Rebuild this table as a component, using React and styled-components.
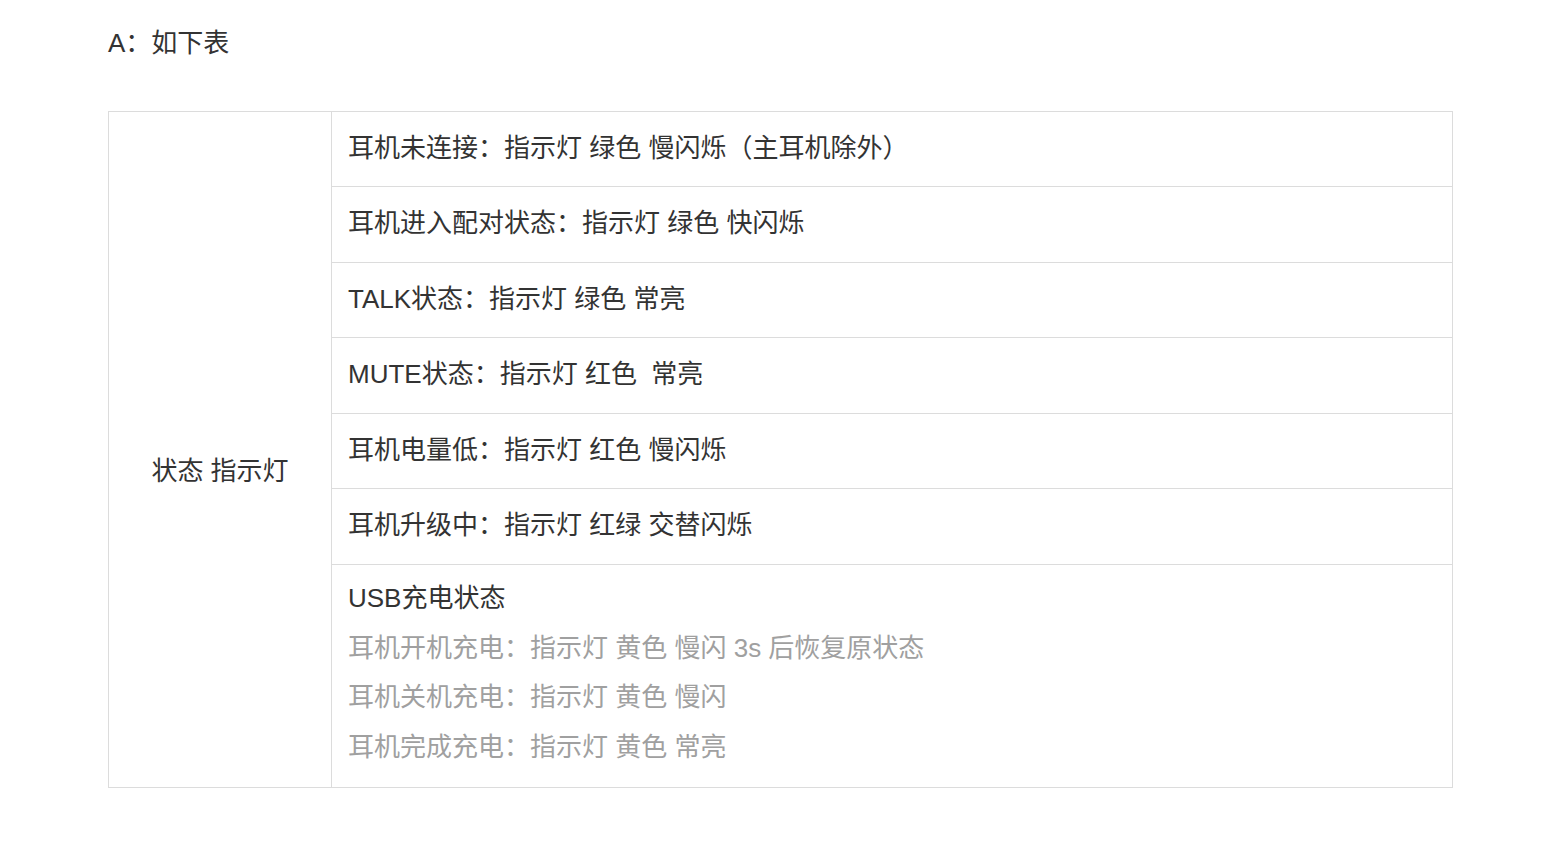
import React from "react";
import styled, { createGlobalStyle } from "styled-components";

const GlobalStyle = createGlobalStyle`
  html, body {
    margin: 0;
    padding: 0;
    background: #fff;
  }
  body {
    font-family: "Liberation Sans", "Noto Sans CJK SC", sans-serif;
    color: #333;
  }
`;

const Page = styled.div`
  padding: 23px 0 0 108px;
  width: 1345px;
`;

const Heading = styled.p`
  margin: 0 0 48px;
  font-size: 26px;
  line-height: 40px;
  color: #333;
`;

const Table = styled.table`
  width: 1345px;
  border-collapse: collapse;
  table-layout: fixed;
  font-size: 26px;
  color: #333;
`;

const LabelCell = styled.td`
  width: 222px;
  padding: 43px 0 0;
  border: 1px solid #dcdcdc;
  text-align: center;
  vertical-align: middle;
  line-height: 50px;
`;

const Cell = styled.td`
  padding: ${(p) => (p.$multi ? "9px 16px 15px" : "10.8px 16px 13.7px")};
  border: 1px solid #dcdcdc;
  line-height: ${(p) => (p.$multi ? "49.6px" : "50px")};
  vertical-align: top;
`;

const Line = styled.div`
  color: ${(p) => (p.$muted ? "#a0a0a0" : "#333")};
  white-space: pre;
`;

const rows = [
  "耳机未连接：指示灯 绿色 慢闪烁（主耳机除外）",
  "耳机进入配对状态：指示灯 绿色 快闪烁",
  "TALK状态：指示灯 绿色 常亮",
  "MUTE状态：指示灯 红色  常亮",
  "耳机电量低：指示灯 红色 慢闪烁",
  "耳机升级中：指示灯 红绿 交替闪烁",
];

const usbLines = [
  "耳机开机充电：指示灯 黄色 慢闪 3s 后恢复原状态",
  "耳机关机充电：指示灯 黄色 慢闪",
  "耳机完成充电：指示灯 黄色 常亮",
];

const App = () => (
  <Page>
    <GlobalStyle />
    <Heading>A：如下表</Heading>
    <Table>
      <tbody>
        {rows.map((text, i) => (
          <tr key={i}>
            {i === 0 && <LabelCell rowSpan={rows.length + 1}>状态 指示灯</LabelCell>}
            <Cell>
              <Line>{text}</Line>
            </Cell>
          </tr>
        ))}
        <tr>
          <Cell $multi>
            <Line>USB充电状态</Line>
            {usbLines.map((text, i) => (
              <Line key={i} $muted>
                {text}
              </Line>
            ))}
          </Cell>
        </tr>
      </tbody>
    </Table>
  </Page>
);

export default App;
